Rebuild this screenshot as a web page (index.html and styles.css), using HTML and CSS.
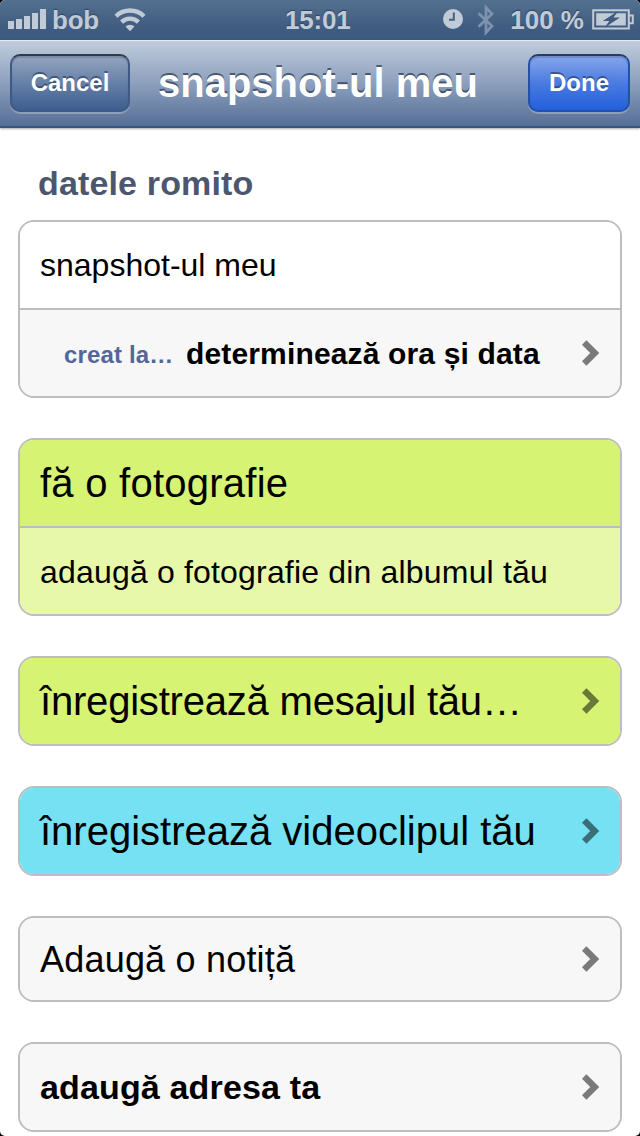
FILE: index.html
```html
<!DOCTYPE html>
<html lang="ro">
<head>
    <meta charset="UTF-8">
    <meta name="viewport" content="width=device-width, initial-scale=1.0">
    <title>snapshot-ul meu</title>
    <link rel="stylesheet" href="styles.css">
</head>
<body>
    <div class="screen">
        <div class="status-bar">
            <div class="status-left">
                <svg class="signal" width="38" height="20" viewBox="0 0 38 20">
                    <path d="M0 12h6v8H0zM8 10h6v10H8zM16 7h6v13h-6zM24 4h6v16h-6zM32 0h6v20h-6z"/>
                </svg>
                <span class="carrier">bob</span>
                <svg class="wifi" width="32" height="24" viewBox="0 0 32 24">
                    <path class="line" d="M2 8.2a20 20 0 0 1 28 0M7.6 14.1a12 12 0 0 1 16.8 0"/>
                    <path d="M11.5 18.6a6.4 6.4 0 0 1 9 0L16 23.2z"/>
                </svg>
            </div>
            <span class="time">15:01</span>
            <div class="status-right">
                <svg class="clock" width="20" height="20" viewBox="0 0 20 20">
                    <circle cx="10" cy="10" r="10"/>
                    <path class="hands" d="M10.8 3.6v7.2H6"/>
                </svg>
                <svg class="bluetooth" width="18" height="32" viewBox="0 0 18 32">
                    <path d="M1.5 9.2L15 22l-6 6.5v-25L15 10 1.5 22.8"/>
                </svg>
                <span class="percent">100 %</span>
                <svg class="battery" width="42" height="21" viewBox="0 0 42 21">
                    <path class="case" d="M1.2 1.2h35.6v18.3H1.2zM37 6.5h3.8v7.8H37"/>
                    <path d="M4.2 4.2h29.6v12.4H4.2z"/>
                    <path class="bolt" d="M26.5 1.8L10.7 12h6.6l-4.8 6.8L28 8.6h-6.6z"/>
                </svg>
            </div>
        </div>

        <div class="nav-bar">
            <button class="btn">Cancel</button>
            <h1>snapshot-ul meu</h1>
            <button class="btn btn-done">Done</button>
        </div>

        <div class="content">
            <h2>datele romito</h2>

            <div class="group">
                <div class="row white">
                    <span class="text">snapshot-ul meu</span>
                </div>
                <div class="row">
                    <span class="label">creat la…</span>
                    <span class="value">determinează ora și data</span>
                    <svg class="chevron" width="18" height="26" viewBox="0 0 18 26"><path d="M2.2 2.5L12.7 13 2.2 23.5"/></svg>
                </div>
            </div>

            <div class="group">
                <div class="row green">
                    <span class="text large">fă o fotografie</span>
                </div>
                <div class="row light-green">
                    <span class="text album">adaugă o fotografie din albumul tău</span>
                </div>
            </div>

            <div class="group">
                <div class="row green">
                    <span class="text large message">înregistrează mesajul tău…</span>
                    <svg class="chevron" width="18" height="26" viewBox="0 0 18 26"><path d="M2.2 2.5L12.7 13 2.2 23.5"/></svg>
                </div>
            </div>

            <div class="group">
                <div class="row blue">
                    <span class="text large video">înregistrează videoclipul tău</span>
                    <svg class="chevron" width="18" height="26" viewBox="0 0 18 26"><path d="M2.2 2.5L12.7 13 2.2 23.5"/></svg>
                </div>
            </div>

            <div class="group">
                <div class="row short">
                    <span class="text note">Adaugă o notiță</span>
                    <svg class="chevron" width="18" height="26" viewBox="0 0 18 26"><path d="M2.2 2.5L12.7 13 2.2 23.5"/></svg>
                </div>
            </div>

            <div class="group">
                <div class="row">
                    <span class="text address">adaugă adresa ta</span>
                    <svg class="chevron" width="18" height="26" viewBox="0 0 18 26"><path d="M2.2 2.5L12.7 13 2.2 23.5"/></svg>
                </div>
            </div>
        </div>
    </div>
</body>
</html>
```
FILE: styles.css
```css
* {
    box-sizing: border-box;
}
body {
    margin: 0;
    background: #000;
    font-family: "Liberation Sans", Arial, sans-serif;
}
.screen {
    width: 640px;
    height: 1136px;
    overflow: hidden;
    background: #fff;
    border-radius: 5px;
}

/* status bar */
.status-bar {
    display: grid;
    grid-template-columns: 277px auto 1fr;
    height: 40px;
    padding: 0 6px 0 8px;
    background: linear-gradient(#53708f, #3e5b80 75%, #3d5a80);
    color: #c1cbd8;
    font-size: 26px;
    font-weight: bold;
    line-height: 40px;
    text-shadow: 0 -1px 1px #2d4361;
}
.status-left, .status-right {
    display: flex;
    align-items: flex-start;
}
.status-right {
    justify-content: flex-end;
}
.status-bar svg {
    fill: #c1cbd8;
}
.signal {
    margin-top: 9px;
}
.carrier {
    margin-left: 6px;
    letter-spacing: -0.2px;
}
.wifi {
    margin: 8px 0 0 15px;
}
.wifi .line {
    fill: none;
    stroke: #c1cbd8;
    stroke-width: 4.4;
}
.time {
    letter-spacing: -0.2px;
}
.clock {
    margin-top: 9px;
}
.clock .hands {
    fill: none;
    stroke: #45617f;
    stroke-width: 2;
}
.bluetooth {
    margin: 4px 0 0 14px;
}
.status-bar .bluetooth {
    fill: none;
    stroke: #7c92ae;
    stroke-width: 2.8;
}
.percent {
    margin-left: 15px;
}
.battery {
    margin: 9px 0 0 8px;
}
.battery .case {
    fill: none;
    stroke: #c1cbd8;
    stroke-width: 2;
}
.battery .bolt {
    fill: #3f5c80;
}

/* navigation bar */
.nav-bar {
    display: flex;
    align-items: flex-start;
    height: 88px;
    padding: 13px 10px 0;
    border-top: 1px solid #e6ebf2;
    border-bottom: 2px solid #375680;
    background: linear-gradient(#c0ccdc, #8c9fbd 50%, #556f96);
    box-shadow: 0 1px 2px rgba(0, 0, 0, 0.35);
}
.nav-bar h1 {
    margin: 6px 0 0 28px;
    color: #fff;
    font-size: 40px;
    line-height: 46px;
    text-shadow: 0 -2px 0 rgba(40, 52, 72, 0.7);
}
.btn {
    width: 120px;
    height: 58px;
    padding: 0;
    border: 2px solid #3f5a84;
    border-top-color: #303b4c;
    border-radius: 10px;
    background: linear-gradient(#94a5bf, #6680a8 50%, #3d5e8f);
    box-shadow: 0 2px 0 rgba(255, 255, 255, 0.25), inset 0 2px 1px rgba(20, 35, 65, 0.2);
    color: #fff;
    font-family: inherit;
    font-size: 24px;
    font-weight: bold;
    text-shadow: 0 -2px 0 rgba(20, 35, 65, 0.5);
}
.btn-done {
    width: 102px;
    margin-left: auto;
    border-color: #2450aa;
    border-top-color: #293c68;
    background: linear-gradient(#87a7ea, #4a7be0 50%, #2260dd);
}

/* form */
.content {
    padding: 35px 18px 0;
}
h2 {
    margin: 0 0 17px 20px;
    color: #4c566c;
    font-size: 34px;
    letter-spacing: 0.15px;
    line-height: 40px;
}
.group {
    margin-bottom: 40px;
    overflow: hidden;
    border: 2px solid #bdbdbf;
    border-radius: 16px;
}
.row {
    display: flex;
    align-items: center;
    height: 86px;
    padding: 0 20px;
    background: #f7f7f7;
    color: #000;
}
.row + .row {
    height: 88px;
    border-top: 2px solid #bdbdbf;
}
.row.short {
    height: 82px;
}
.white {
    background: #fff;
}
.green {
    background: #d6f374;
}
.light-green {
    background: #e7f8aa;
}
.blue {
    background: #75e1f3;
}
.text {
    font-size: 32px;
}
.large {
    font-size: 40px;
    letter-spacing: 0.25px;
}
.message {
    letter-spacing: -0.2px;
}
.video {
    letter-spacing: 0;
}
.album {
    padding-top: 2px;
    letter-spacing: 0.18px;
}
.note {
    padding-top: 2px;
    font-size: 36px;
    letter-spacing: 0.2px;
}
.address {
    font-size: 34px;
    font-weight: bold;
    letter-spacing: 0.15px;
}
.label {
    width: 110px;
    margin-left: 24px;
    padding-top: 3px;
    color: #536699;
    font-size: 24px;
    font-weight: bold;
    letter-spacing: 0.15px;
    white-space: nowrap;
}
.value {
    margin-left: 12px;
    padding-top: 2px;
    font-size: 30px;
    font-weight: bold;
    letter-spacing: 0.15px;
}
.chevron {
    margin-left: auto;
    fill: none;
    stroke: #000;
    stroke-width: 6.4;
    opacity: 0.5;
}
```
